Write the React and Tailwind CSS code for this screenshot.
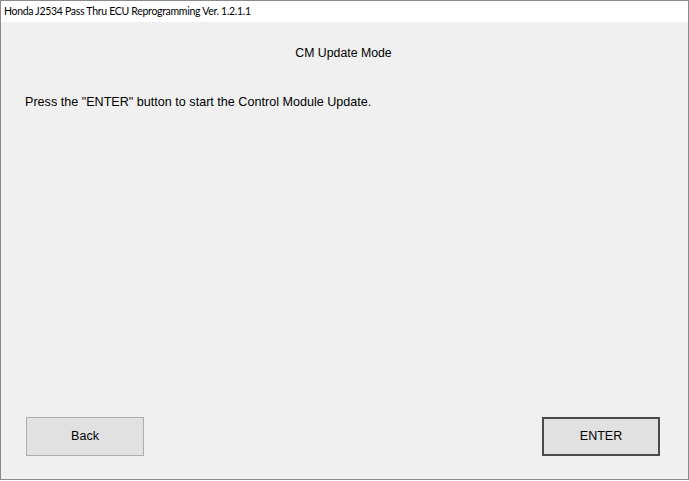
export default function App() {
  return (
    <div className="w-[689px] h-[481px] bg-white">
      <div className="w-[689px] h-[480px] border border-[#8a8a8a] flex flex-col bg-[#f0f0f0]">
        <div className="h-[21px] bg-white flex items-center pl-[3px] text-[10.5px] tracking-[-0.3px] text-black font-['Lato',sans-serif]">
          Honda J2534 Pass Thru ECU Reprogramming Ver. 1.2.1.1
        </div>
        <div className="flex-1 flex flex-col font-['Liberation_Sans',Arial,sans-serif] text-[12px] text-black">
          <div className="text-center pt-[22px] pr-[2px] text-[12.3px]">CM Update Mode</div>
          <div className="pl-[24px] pt-[31px] text-[12.6px]">Press the "ENTER" button to start the Control Module Update.</div>
          <div className="flex-1" />
          <div className="flex justify-between pl-[25px] pr-[28px] pb-[23px]">
            <button className="w-[118px] h-[39px] bg-[#e1e1e1] border border-[#adadad] text-[12.5px] text-black">Back</button>
            <button className="w-[118px] h-[39px] bg-[#e1e1e1] border-2 border-[#4a4a4a] text-[12.5px] text-black">ENTER</button>
          </div>
        </div>
      </div>
    </div>
  );
}
